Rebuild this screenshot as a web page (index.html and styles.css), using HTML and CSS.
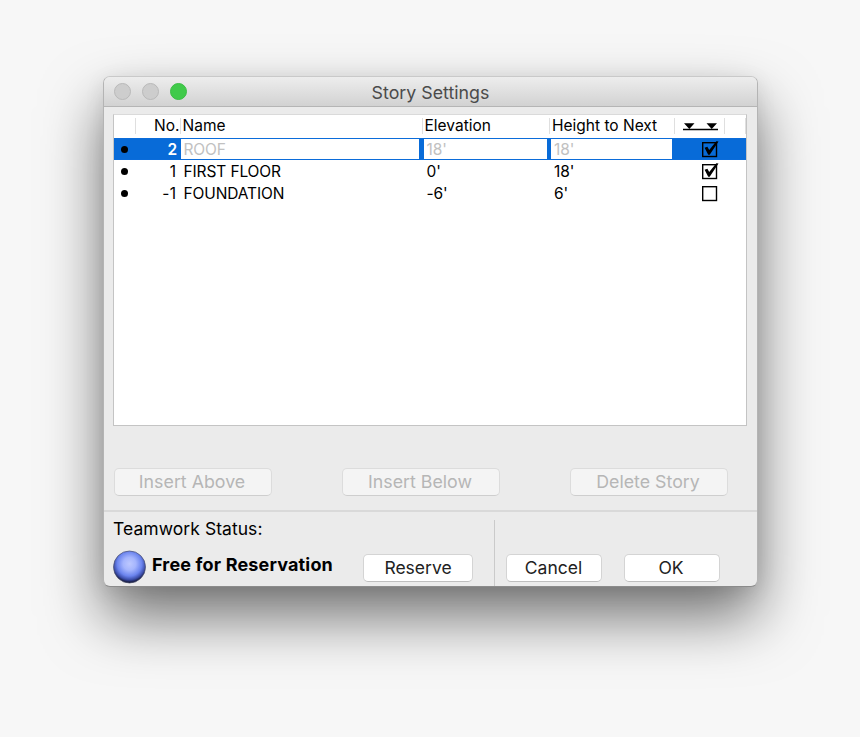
FILE: index.html
```html
<!DOCTYPE html>
<html lang="en">
<head>
<meta charset="utf-8">
<title>Story Settings</title>
<link rel="stylesheet" href="styles.css">
</head>
<body>
<main class="window">
  <header class="titlebar">
    <div class="lights"><i class="light"></i><i class="light"></i><i class="light green"></i></div>
    <h1><span>Story Settings</span></h1>
  </header>
  <section class="table">
    <div class="row head">
      <div class="cell"></div>
      <div class="cell no">No.</div>
      <div class="cell">Name</div>
      <div class="cell elev">Elevation</div>
      <div class="cell height">Height to Next</div>
      <div class="cell icon"><svg width="36" height="10" viewBox="0 0 36 10"><path d="M0 8.5H35" stroke="#000" stroke-width="1.6"/><path d="M1 2.2H11.5L6.3 8ZM23.5 2.2H34L28.7 8Z"/></svg></div>
      <div class="cell"></div>
    </div>
    <div class="row selected">
      <div class="bullet"></div>
      <div class="num">2</div>
      <div class="field name">ROOF</div>
      <div class="field elevation">18'</div>
      <div class="field next">18'</div>
      <div class="check"><svg width="18" height="20" viewBox="0 0 18 20"><rect x="1.7" y="3.7" width="13.8" height="13.8" fill="none" stroke="#000" stroke-width="1.4"/><path d="M3.6 8.8 6.4 7.8 8.2 11 15.3 2.2 17.5 2.4 8.7 15.7 7.2 15.7Z"/></svg></div>
    </div>
    <div class="row">
      <div class="bullet"></div>
      <div class="num">1</div>
      <div class="value">FIRST FLOOR</div>
      <div class="value len">0'</div>
      <div class="value len">18'</div>
      <div class="check"><svg width="18" height="20" viewBox="0 0 18 20"><rect x="1.7" y="3.7" width="13.8" height="13.8" fill="none" stroke="#000" stroke-width="1.4"/><path d="M3.6 8.8 6.4 7.8 8.2 11 15.3 2.2 17.5 2.4 8.7 15.7 7.2 15.7Z"/></svg></div>
    </div>
    <div class="row">
      <div class="bullet"></div>
      <div class="num">-1</div>
      <div class="value">FOUNDATION</div>
      <div class="value len">-6'</div>
      <div class="value len">6'</div>
      <div class="check"><svg width="18" height="20" viewBox="0 0 18 20"><rect x="1.7" y="3.7" width="13.8" height="13.8" fill="none" stroke="#000" stroke-width="1.4"/></svg></div>
    </div>
  </section>
  <div class="actions">
    <button disabled>Insert Above</button>
    <button disabled>Insert Below</button>
    <button disabled>Delete Story</button>
  </div>
  <footer class="footer">
    <section class="teamwork">
      <div class="caption"><span>Teamwork Status:</span></div>
      <div class="status">
        <svg class="orb" width="34" height="34" viewBox="0 0 34 34">
          <defs>
            <radialGradient id="glow" cx=".5" cy=".4" r=".62">
              <stop offset="0" stop-color="#bdc8ff"/><stop offset=".32" stop-color="#a5b5fd"/><stop offset=".62" stop-color="#6b84ee"/><stop offset=".8" stop-color="#3c4eaa"/><stop offset=".96" stop-color="#0d0e28"/>
            </radialGradient>
          </defs>
          <circle cx="17.5" cy="17" r="16" fill="url(#glow)" stroke="#4b5070" stroke-width=".7"/>
        </svg>
        <strong>Free for Reservation</strong>
        <button class="reserve">Reserve</button>
      </div>
    </section>
    <section class="confirm">
      <button>Cancel</button>
      <button>OK</button>
    </section>
  </footer>
</main>
</body>
</html>
```
FILE: styles.css
```css
* { box-sizing: border-box; }
body {
  margin: 0;
  height: 737px;
  padding: 76px 0 0 103px;
  overflow: hidden;
  background: #f7f7f7;
  color: #000;
  font-family: Inter, "Liberation Sans", sans-serif;
}
.window {
  width: 655px;
  height: 511px;
  border: 1px solid #bdbdbd;
  border-color: #c9c9c9 #b4b4b4 #8b8b8b;
  border-radius: 7px;
  background: #ebebeb;
  box-shadow: 0 30px 60px rgba(0, 0, 0, .54), 0 4px 20px rgba(0, 0, 0, .08);
}
.titlebar {
  display: grid;
  grid-template-columns: 110px 1fr 110px;
  align-items: center;
  height: 30px;
  border-bottom: 1px solid #b5b5b5;
  border-radius: 6px 6px 0 0;
  background: linear-gradient(#ededed, #d2d2d2);
}
.lights { display: flex; gap: 10.8px; padding-left: 10px; }
.light {
  width: 17px;
  height: 17px;
  border: 1px solid #b9b9b9;
  border-radius: 50%;
  background: #cdcdcd;
}
.green { border-color: #3bbd44; background: #40ca4a; }
h1 {
  margin: 2px 0 0;
  color: #4b4b4b;
  text-align: center;
  font-size: 17.8px;
  font-weight: 400;
  line-height: 26px;
  letter-spacing: 0;
}
.table {
  width: 634px;
  height: 312px;
  margin: 7px 0 0 9px;
  border: 1px solid #c4c4c4;
  border-top-color: #dadada;
  background: #fff;
  font-size: 15.5px;
}
.row {
  display: grid;
  grid-template-columns: 22px 44.5px 242px 127.5px 125px 50px 1fr;
  height: 22px;
  line-height: 24px;
  letter-spacing: -.12px;
  white-space: nowrap;
}
.head { height: 23px; padding-top: 3px; line-height: 16px; letter-spacing: 0; }
.cell { height: 16px; border-right: 1px solid #dfdfdf; padding-left: 2px; }
.no { padding: 0; text-align: right; }
.icon { display: flex; align-items: center; padding-left: 8px; }
.selected { border: solid #0b6cda; border-width: 1px 0; background: #086bd8; line-height: 22px; }
.bullet { width: 7px; height: 7px; margin: 8px 0 0 7px; border-radius: 50%; background: #000; }
.selected .bullet { margin-top: 7px; }
.num { padding-right: 4px; text-align: right; letter-spacing: .4px; }
.selected .num { padding-right: 3px; color: #fff; font-weight: 600; }
.value { padding-left: 3px; }
.len { padding-left: 4px; }
.field { height: 20px; padding-left: 3px; background: #fff; color: #c1c1c1; }
.name { width: 238.5px; }
.elevation { width: 123px; margin-left: 1px; }
.next { width: 121px; margin-left: 1px; }
.check { padding-left: 26px; }
.check svg { display: block; margin-top: 1px; }
.selected .check svg { margin-top: 0; }
button {
  width: 96px;
  height: 28px;
  padding: 0;
  border: 1px solid #d4d4d4;
  border-bottom-color: #bebebe;
  border-radius: 5px;
  background: #fff;
  color: #222;
  font: 17.5px/26px Inter, "Liberation Sans", sans-serif;
}
.actions { display: flex; gap: 70px; padding: 42px 0 0 10px; }
.actions button {
  width: 158px;
  padding-right: 2px;
  border-color: #dcdcdc;
  border-bottom-color: #cecece;
  background: #f4f4f4;
  color: #b6b6b6;
  font-size: 17.8px;
}
.footer { display: flex; height: 76px; margin-top: 14px; border-top: 2px solid #d9d9d9; }
.teamwork { width: 390px; padding: 6px 0 0 9px; }
.caption { font-size: 17.5px; line-height: 22px; letter-spacing: .06px; }
.status { display: flex; align-items: center; margin-top: 8px; }
.orb { flex: none; margin: 2px 6px 0 -1px; }
strong { width: 201px; margin-top: -4px; font-size: 18px; font-weight: 700; letter-spacing: .16px; white-space: nowrap; }
.reserve { width: 110px; margin: 4px 0 0 10px; }
.confirm { display: flex; gap: 21.5px; height: 66px; margin-top: 8px; padding: 34px 0 0 11px; border-left: 1px solid #cacaca; }
.confirm button { padding-right: 1px; }
```
